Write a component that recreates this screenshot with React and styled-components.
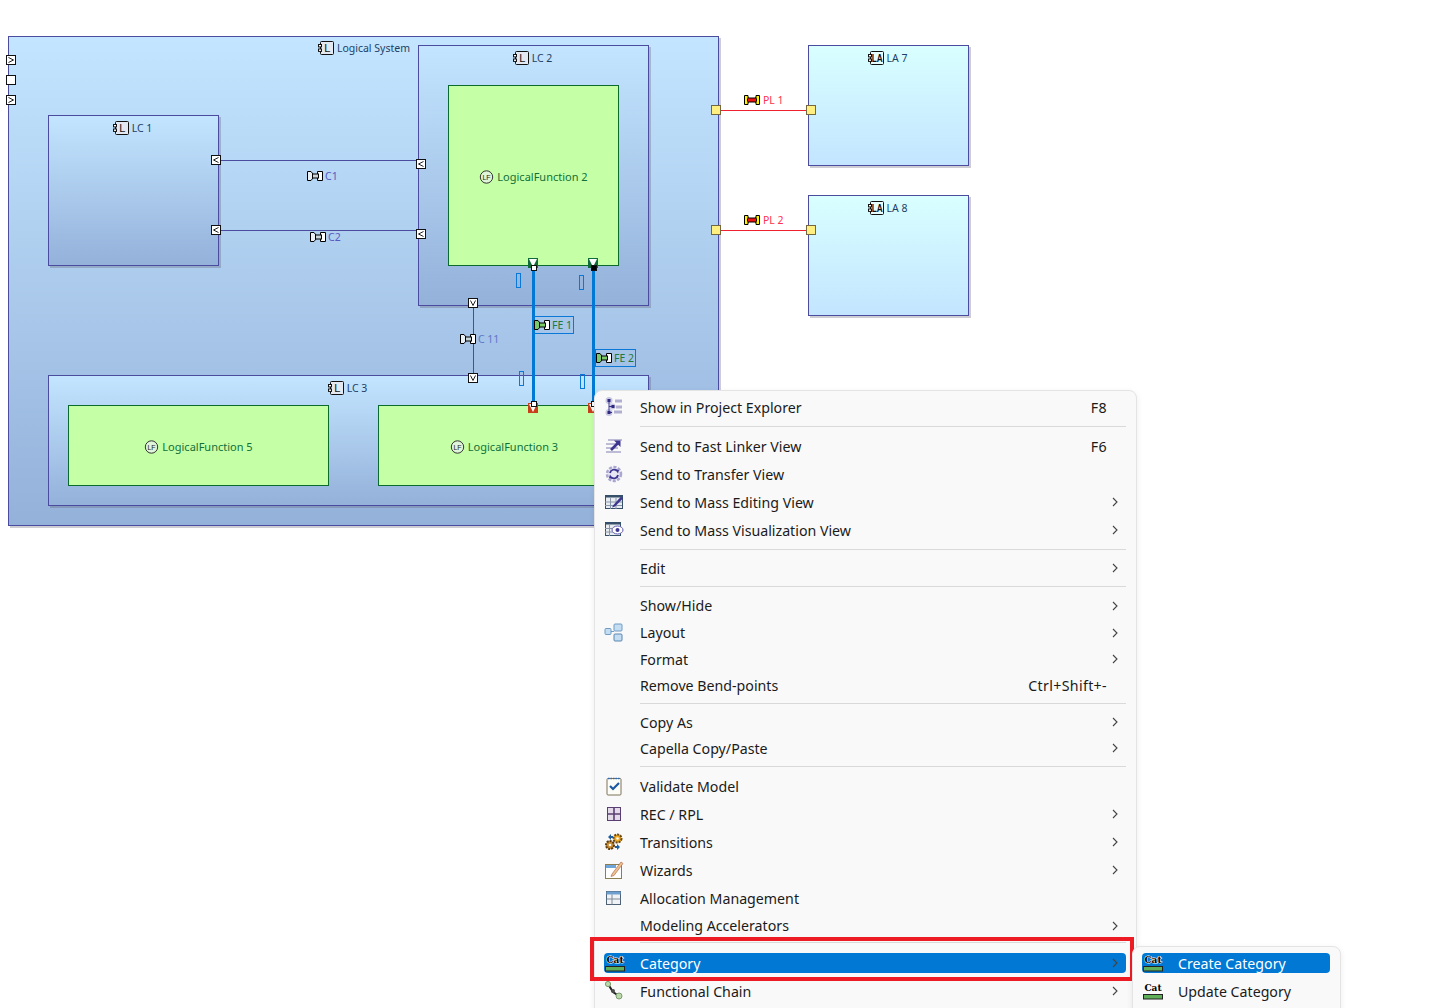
import React from "react";
import styled, { createGlobalStyle } from "styled-components";

const GlobalStyle = createGlobalStyle`
  html, body {
    margin: 0;
    height: 1008px;
    overflow: hidden;
    background: #fff;
  }
`;

const Canvas = styled.div`
  position: relative;
  width: 1454px;
  height: 1008px;
  overflow: hidden;
  font-family: "Noto Sans", "Open Sans", sans-serif;
`;

const EdgeLayer = styled.svg`
  position: absolute;
  left: 0;
  top: 0;
  z-index: 3;
`;

const Node = styled.div`
  position: absolute;
  left: ${p => p.$x}px;
  top: ${p => p.$y}px;
  width: ${p => p.$w}px;
  height: ${p => p.$h}px;
  box-sizing: border-box;
  display: flex;
  border: 1px solid ${p => (p.$kind === "function" ? "#0b6b2d" : "#4b4ba0")};
  box-shadow: ${p => (p.$kind === "function" ? "none" : "2px 2px 0 rgba(90, 90, 110, 0.3)")};
  color: ${p => (p.$kind === "function" ? "#11703a" : "#1d3f66")};
  justify-content: ${p => (p.$end ? "flex-end" : "center")};
  align-items: ${p => (p.$kind === "function" ? "center" : "flex-start")};
  padding: ${p => (p.$kind === "function" ? "2px" : p.$end ? "4px" : "5px")}
    ${p => (p.$end ? "308px" : p.$kind === "function" ? "0" : "2px")} 0 0;
  background: ${p =>
    p.$kind === "function"
      ? "#c5ffa6"
      : p.$kind === "actor"
      ? "linear-gradient(#d9ffff, #c3e5ff)"
      : "linear-gradient(#c3e5ff, #94b1da)"};
`;

const NodeTitle = styled.span`
  display: inline-flex;
  align-items: center;
  gap: 3px;
  font-size: ${p => (p.$function ? 11 : 10.5)}px;
  line-height: 14px;
  white-space: nowrap;
`;

const SquarePort = styled.div`
  position: absolute;
  z-index: 4;
  left: ${p => p.$x}px;
  top: ${p => p.$y}px;
  width: 10px;
  height: 10px;
  box-sizing: border-box;
  display: flex;
  border: 1px solid ${p => (p.$tone === "actor" ? "#75683f" : "#111")};
  background: ${p => (p.$tone === "actor" ? "#ffee80" : "#fff")};
`;

const PinPort = styled.div`
  position: absolute;
  z-index: 4;
  left: ${p => p.$x}px;
  top: ${p => p.$y}px;
  width: 10px;
  height: 10px;
  background: ${p => (p.$tone === "red" ? "#c8401a" : "#0f6b3a")};

  &::after {
    content: "";
    position: absolute;
    left: 1px;
    top: 1px;
    border-left: 4px solid transparent;
    border-right: 4px solid transparent;
    border-top: 8px solid #fff;
  }
`;

const Handle = styled.div`
  position: absolute;
  z-index: 5;
  left: ${p => p.$x}px;
  top: ${p => p.$y}px;
  width: 6px;
  height: 6px;
  box-sizing: border-box;
  border: 1px solid #111;
  background: ${p => (p.$dark ? "#000" : "#fff")};
`;

const Marker = styled.div`
  position: absolute;
  z-index: 4;
  left: ${p => p.$x}px;
  top: ${p => p.$y}px;
  width: 5px;
  height: ${p => p.$h}px;
  box-sizing: border-box;
  border: 1px solid #0a78d6;
`;

const EdgeLabel = styled.div`
  position: absolute;
  z-index: 5;
  left: ${p => p.$x}px;
  top: ${p => p.$y}px;
  display: flex;
  align-items: center;
  gap: ${p => (p.$physical ? 3 : 2)}px;
  height: ${p => (p.$selected ? 18 : 12)}px;
  box-sizing: border-box;
  padding-right: ${p => (p.$selected ? "1px" : "0")};
  border: ${p => (p.$selected ? "1px solid #0a78d6" : "none")};
  font-size: 10.5px;
  white-space: nowrap;
  color: ${p => p.$color};
`;

const Menu = styled.div`
  position: absolute;
  z-index: 10;
  left: 594px;
  top: 390px;
  width: 543px;
  box-sizing: border-box;
  padding: 2px 10px 0 9px;
  height: 640px;
  background: #f9f9f9;
  border: 1px solid #e4e4e4;
  border-radius: 8px;
  box-shadow: 0 2px 6px rgba(0, 0, 0, 0.08);
`;

const SubMenu = styled(Menu)`
  z-index: 12;
  left: 1132px;
  top: 946px;
  width: 209px;
  height: 90px;
  padding: 2px 10px 0 9px;
`;

const Row = styled.div`
  display: grid;
  grid-template-columns: ${p => (p.$sub ? "36px 1fr" : "36px 1fr auto 19px")};
  align-items: center;
  height: ${p => p.$h || 28}px;
  font-size: 14.2px;
  color: ${p => (p.$active ? "#fff" : "#1b1b1b")};
  white-space: nowrap;

  ${p =>
    p.$active &&
    `
    background: #0078d4;
    border-radius: 4px;
    height: 20px;
    margin: 4px 0;
  `}
`;

const IconSlot = styled.span`
  display: flex;
  align-items: center;
  justify-content: flex-start;
`;

const Shortcut = styled.span`
  color: #1b1b1b;
  letter-spacing: 0.35px;
`;

const Chevron = styled.svg`
  margin-left: 5px;
  width: 6px;
  height: 10px;
`;

const Separator = styled.div`
  height: 1px;
  margin: ${p => p.$top || 5}px 0 ${p => p.$bottom || 5}px 36px;
  background: #d9d9d9;
`;

const Highlight = styled.div`
  position: absolute;
  z-index: 11;
  left: 590px;
  top: 937px;
  width: 544px;
  height: 44px;
  box-sizing: border-box;
  border: 4px solid #ed1c24;
`;

const ComponentIcon = ({ text = "L" }) => (
  <svg width="16" height="14" viewBox="0 0 16 14">
    <rect x="2.5" y="0.5" width="13" height="13" rx="1" fill={text === "LA" ? "#e8ffff" : "#e4e8f0"} stroke="#111" />
    <rect x="0.5" y="3.5" width="3" height="2.4" fill="#fff" stroke="#111" />
    <rect x="0.5" y="8" width="3" height="2.4" fill="#fff" stroke="#111" />
    <text
      x="9.2"
      y={text === "LA" ? 10.8 : 11}
      textAnchor="middle"
      fontFamily="Liberation Sans, sans-serif"
      fontWeight={text === "LA" ? 700 : 400}
      fontSize={text === "LA" ? 10 : 11}
      textLength={text === "LA" ? 11 : undefined}
      lengthAdjust={text === "LA" ? "spacingAndGlyphs" : undefined}
      fill="#111"
    >
      {text}
    </text>
  </svg>
);

const FunctionIcon = () => (
  <svg width="15" height="14" viewBox="0 0 15 14">
    <circle cx="7.5" cy="7" r="6.2" fill="#dff5d8" stroke="#333" />
    <text x="7.5" y="9.6" textAnchor="middle" fontFamily="Liberation Sans, sans-serif" fontSize="7" fill="#222">
      LF
    </text>
  </svg>
);

const ExchangeIcon = ({ left = "#e8f0f5", right = "#fff", bar = "#c8d4d8" }) => (
  <svg width="16" height="10" viewBox="0 0 16 10">
    <path d="M0.5 0.5H4L6 3V7L4 9.5H0.5Z" fill={left} stroke="#000" />
    <path d="M15.5 0.5H10.5V3L9.5 3.5V6.5L10.5 7V9.5H15.5Z" fill={right} stroke="#000" />
    <rect x="5.5" y="3" width="6" height="4" fill={bar} stroke="#000" />
  </svg>
);

const PhysicalIcon = () => (
  <svg width="16" height="10" viewBox="0 0 16 10">
    <path d="M0.5 0.5H4V3H5V7H4V9.5H0.5Z" fill="#fff200" stroke="#000" />
    <path d="M15.5 0.5H12V3H11V7H12V9.5H15.5Z" fill="#fff200" stroke="#000" />
    <rect x="3.5" y="3" width="9" height="4" rx="1" fill="#f01010" stroke="#000" />
  </svg>
);

const PortGlyph = ({ dir }) => {
  const paths = {
    right: "M1.5 1.5L6.5 4L1.5 6.5",
    left: "M6.5 1.5L1.5 4L6.5 6.5",
    down: "M1.5 1.5L4 6.5L6.5 1.5"
  };
  return (
    <svg width="8" height="8" viewBox="0 0 8 8">
      {paths[dir] && <path d={paths[dir]} fill="none" stroke="#222" strokeWidth="1" />}
    </svg>
  );
};

const ExplorerIcon = () => (
  <svg width="20" height="20" viewBox="0 0 20 20">
    <circle cx="5" cy="3.5" r="3.5" fill="#c9c7e2" />
    <circle cx="5" cy="15.5" r="3.5" fill="#c9c7e2" />
    <circle cx="8.5" cy="9.5" r="3" fill="#c9c7e2" />
    <path d="M11 4h7M12 10h6M10 15h8" stroke="#b1afd0" strokeWidth="3" />
    <path d="M5 3v13M5 9.5h4M5 15.5h3" stroke="#3a3690" strokeWidth="1" fill="none" />
    <rect x="3.5" y="2" width="3" height="3" fill="#2e2a80" />
    <rect x="7.5" y="8" width="3" height="3" fill="#2e2a80" />
    <rect x="3.5" y="14" width="3" height="3" fill="#2e2a80" />
  </svg>
);

const FastLinkerIcon = () => (
  <svg width="20" height="20" viewBox="0 0 20 20">
    <path d="M4 4h14M2 8h13M2 12h12M2 16h15" stroke="#bdbcd6" strokeWidth="2" />
    <path d="M7 14L15 6" stroke="#3d3690" strokeWidth="2.6" />
    <path d="M10 4.5H16.5V11Z" fill="#3d3690" />
  </svg>
);

const TransferIcon = () => (
  <svg width="20" height="20" viewBox="0 0 20 20">
    <circle cx="10" cy="10" r="7" fill="#e8e7f3" stroke="#a9a7cf" strokeWidth="2.5" strokeDasharray="3 1.6" />
    <path d="M6 9a4 4 0 0 1 7-2M14 11a4 4 0 0 1-7 2" fill="none" stroke="#3d3690" strokeWidth="1.8" />
    <path d="M11 5l4 1-1 3.5zM9 15l-4-1 1-3.5z" fill="#3d3690" />
  </svg>
);

const MassEditIcon = () => (
  <svg width="20" height="20" viewBox="0 0 20 20">
    <rect x="1.5" y="3.5" width="17" height="13" fill="#e9edf2" stroke="#37506a" />
    <rect x="1" y="3" width="18" height="2.5" fill="#37506a" />
    <path d="M6.5 6v11M12 6v11M1 10h17M1 13.5h17" stroke="#8796a8" />
    <path d="M9 13.5l8-9 2 2-8 8-3 1z" fill="#3d3690" />
  </svg>
);

const MassVizIcon = () => (
  <svg width="20" height="20" viewBox="0 0 20 20">
    <rect x="1.5" y="2.5" width="15" height="13" fill="#e9edf2" stroke="#37506a" />
    <rect x="1" y="2" width="15" height="2.5" fill="#37506a" />
    <path d="M5.5 5v11M1 8.5h15M1 12h15" stroke="#8796a8" />
    <ellipse cx="13.5" cy="10" rx="5.5" ry="4" fill="#fff" stroke="#5f5ab0" />
    <circle cx="13.5" cy="10" r="2" fill="#3d3690" />
  </svg>
);

const LayoutIcon = () => (
  <svg width="20" height="20" viewBox="0 0 20 20">
    <rect x="1" y="5.5" width="6" height="6" rx="1" fill="#c4ddf2" stroke="#6f9cc4" />
    <rect x="10" y="1" width="8" height="7" rx="1" fill="#c4ddf2" stroke="#6f9cc4" />
    <rect x="10" y="11" width="8" height="7" rx="1" fill="#c4ddf2" stroke="#5b87b0" />
    <path d="M7 8.5h3" stroke="#6f9cc4" />
  </svg>
);

const ValidateIcon = () => (
  <svg width="20" height="20" viewBox="0 0 20 20">
    <rect x="3" y="2.5" width="14" height="16.5" rx="1" fill="#fdfdf8" stroke="#7c7356" />
    <path d="M4 2.5h12" stroke="#2f6bb0" strokeWidth="1.4" strokeDasharray="1.5 1" />
    <path d="M6 10l3 3 6-6" fill="none" stroke="#1d5aa0" strokeWidth="2.2" />
  </svg>
);

const GridIcon = () => (
  <svg width="20" height="20" viewBox="0 0 20 20">
    <rect x="3.5" y="3.5" width="13" height="13" fill="#e3dbe9" stroke="#5a3f72" />
    <path d="M10 3v14M3 10h14" stroke="#5a3f72" strokeWidth="1.6" />
  </svg>
);

const TransitionsIcon = () => (
  <svg width="20" height="20" viewBox="0 0 20 20">
    <circle cx="13.5" cy="6.5" r="4" fill="#f0a820" stroke="#6a4a10" strokeWidth="2" strokeDasharray="2 1" />
    <circle cx="13.5" cy="6.5" r="1.3" fill="#fff" />
    <circle cx="6" cy="13" r="4" fill="#c98a30" stroke="#5a3a10" strokeWidth="2" strokeDasharray="2 1" />
    <circle cx="6" cy="13" r="1.3" fill="#fff" />
    <path d="M4 5l3-3v2h2v2H7v2zM16 15l-3 3v-2h-2v-2h2v-2z" fill="#1f5f9f" />
  </svg>
);

const WizardIcon = () => (
  <svg width="20" height="20" viewBox="0 0 20 20">
    <rect x="1.5" y="4.5" width="16" height="14" fill="#fff" stroke="#8c7d52" />
    <rect x="2" y="5" width="10" height="3" fill="#6ea6dc" />
    <path d="M8 14l9-12 2 1.5-9 12-3 1z" fill="#f0c08a" stroke="#b0705a" strokeWidth="0.7" />
  </svg>
);

const AllocationIcon = () => (
  <svg width="20" height="20" viewBox="0 0 20 20">
    <rect x="2.5" y="3.5" width="14" height="13" fill="#f0f2f5" stroke="#4e6176" />
    <rect x="2.5" y="3.5" width="14" height="3" fill="#6d9fd0" />
    <path d="M2.5 11h14M8 6.5v10" stroke="#7e8b99" />
  </svg>
);

const CategoryIcon = ({ active }) => (
  <svg width="22" height="20" viewBox="0 0 22 20">
    <text
      x="11"
      y="9.5"
      textAnchor="middle"
      fontFamily="DejaVu Serif, serif"
      fontWeight="700"
      fontSize="9"
      fill="#000"
      stroke={active ? "#fff" : "none"}
      strokeWidth={active ? 1 : 0}
      paintOrder="stroke"
    >
      Cat
    </text>
    <rect x="1.5" y="13.5" width="19" height="4.5" fill="#5fae58" stroke="#222" />
  </svg>
);

const ChainIcon = () => (
  <svg width="20" height="20" viewBox="0 0 20 20">
    <path d="M4 3l5 8 6 4" fill="none" stroke="#222" strokeWidth="2" />
    <circle cx="4" cy="3" r="2.6" fill="#bcd9a8" stroke="#7a9a70" />
    <circle cx="9" cy="10" r="2" fill="#4d4d4d" />
    <circle cx="15" cy="15" r="3" fill="#bcd9a8" stroke="#7a9a70" />
  </svg>
);

const MENU_ITEMS = [
  { label: "Show in Project Explorer", icon: <ExplorerIcon />, shortcut: "F8" },
  { separator: true, top: 5, bottom: 5 },
  { label: "Send to Fast Linker View", icon: <FastLinkerIcon />, shortcut: "F6" },
  { label: "Send to Transfer View", icon: <TransferIcon /> },
  { label: "Send to Mass Editing View", icon: <MassEditIcon />, more: true },
  { label: "Send to Mass Visualization View", icon: <MassVizIcon />, more: true },
  { separator: true, top: 5, bottom: 4 },
  { label: "Edit", more: true },
  { separator: true, top: 4, bottom: 5 },
  { label: "Show/Hide", more: true, h: 27 },
  { label: "Layout", icon: <LayoutIcon />, more: true, h: 27 },
  { label: "Format", more: true, h: 26 },
  { label: "Remove Bend-points", shortcut: "Ctrl+Shift+-", h: 26 },
  { separator: true, top: 5, bottom: 5 },
  { label: "Copy As", more: true, h: 26 },
  { label: "Capella Copy/Paste", more: true, h: 26 },
  { separator: true, top: 5, bottom: 5 },
  { label: "Validate Model", icon: <ValidateIcon /> },
  { label: "REC / RPL", icon: <GridIcon />, more: true },
  { label: "Transitions", icon: <TransitionsIcon />, more: true },
  { label: "Wizards", icon: <WizardIcon />, more: true },
  { label: "Allocation Management", icon: <AllocationIcon /> },
  { label: "Modeling Accelerators", more: true, h: 27 },
  { separator: true, top: 3, bottom: 10 },
  { label: "Category", icon: <CategoryIcon active />, more: true, active: true },
  { label: "Functional Chain", icon: <ChainIcon />, more: true }
];

const MoreArrow = () => (
  <Chevron viewBox="0 0 6 10">
    <path d="M1 1l4 4-4 4" fill="none" stroke="#444" strokeWidth="1.1" />
  </Chevron>
);

const MenuRow = ({ item }) => (
  <Row $active={item.active} $h={item.h}>
    <IconSlot>{item.icon}</IconSlot>
    <span>{item.label}</span>
    <Shortcut>{item.shortcut}</Shortcut>
    {item.more ? <MoreArrow /> : <span />}
  </Row>
);

const PORTS = [
  { x: 6, y: 55, dir: "right" },
  { x: 6, y: 75 },
  { x: 6, y: 95, dir: "right" },
  { x: 211, y: 155, dir: "left" },
  { x: 211, y: 225, dir: "left" },
  { x: 416, y: 159, dir: "left" },
  { x: 416, y: 229, dir: "left" },
  { x: 468, y: 298, dir: "down" },
  { x: 468, y: 373, dir: "down" },
  { x: 711, y: 105, tone: "actor" },
  { x: 806, y: 105, tone: "actor" },
  { x: 711, y: 225, tone: "actor" },
  { x: 806, y: 225, tone: "actor" }
];

const MARKERS = [
  { x: 516, y: 273, h: 15 },
  { x: 579, y: 275, h: 15 },
  { x: 519, y: 371, h: 15 },
  { x: 580, y: 374, h: 15 }
];

const App = () => (
  <Canvas>
    <GlobalStyle />
    <Node $x={8} $y={36} $w={711} $h={490} $end>
      <NodeTitle>
        <ComponentIcon />
        Logical System
      </NodeTitle>
    </Node>
    <Node $x={48} $y={115} $w={171} $h={151}>
      <NodeTitle>
        <ComponentIcon />
        LC 1
      </NodeTitle>
    </Node>
    <Node $x={418} $y={45} $w={231} $h={261}>
      <NodeTitle>
        <ComponentIcon />
        LC 2
      </NodeTitle>
    </Node>
    <Node $x={448} $y={85} $w={171} $h={181} $kind="function">
      <NodeTitle $function>
        <FunctionIcon />
        LogicalFunction 2
      </NodeTitle>
    </Node>
    <Node $x={48} $y={375} $w={601} $h={131}>
      <NodeTitle>
        <ComponentIcon />
        LC 3
      </NodeTitle>
    </Node>
    <Node $x={68} $y={405} $w={261} $h={81} $kind="function">
      <NodeTitle $function>
        <FunctionIcon />
        LogicalFunction 5
      </NodeTitle>
    </Node>
    <Node $x={378} $y={405} $w={252} $h={81} $kind="function">
      <NodeTitle $function>
        <FunctionIcon />
        LogicalFunction 3
      </NodeTitle>
    </Node>
    <Node $x={808} $y={45} $w={161} $h={121} $kind="actor">
      <NodeTitle>
        <ComponentIcon text="LA" />
        LA 7
      </NodeTitle>
    </Node>
    <Node $x={808} $y={195} $w={161} $h={121} $kind="actor">
      <NodeTitle>
        <ComponentIcon text="LA" />
        LA 8
      </NodeTitle>
    </Node>

    <EdgeLayer width="1454" height="1008">
      <path d="M221 160.5H416M221 230.5H416M473.5 308V373" stroke="#4b4ba0" fill="none" />
      <path d="M721 110.5H806M721 230.5H806" stroke="#f02030" fill="none" />
      <path d="M533.5 268V403M593.5 268V403" stroke="#0078d4" strokeWidth="3" fill="none" />
    </EdgeLayer>

    {PORTS.map(port => (
      <SquarePort key={`${port.x}-${port.y}`} $x={port.x} $y={port.y} $tone={port.tone}>
        <PortGlyph dir={port.dir} />
      </SquarePort>
    ))}
    {MARKERS.map(marker => (
      <Marker key={marker.x} $x={marker.x} $y={marker.y} $h={marker.h} />
    ))}
    <PinPort $x={528} $y={258} />
    <PinPort $x={588} $y={258} />
    <PinPort $x={528} $y={403} $tone="red" />
    <PinPort $x={588} $y={403} $tone="red" />
    <Handle $x={531} $y={265} />
    <Handle $x={591} $y={265} $dark />
    <Handle $x={531} $y={401} />
    <Handle $x={591} $y={401} />

    <EdgeLabel $x={307} $y={170} $color="#5858c0">
      <ExchangeIcon />
      C1
    </EdgeLabel>
    <EdgeLabel $x={310} $y={231} $color="#5858c0">
      <ExchangeIcon />
      C2
    </EdgeLabel>
    <EdgeLabel $x={460} $y={333} $color="#5e78c8">
      <ExchangeIcon />C 11
    </EdgeLabel>
    <EdgeLabel $x={533} $y={316} $color="#1f7a3a" $selected>
      <ExchangeIcon left="#7ccb6a" right="#fff" bar="#7ccb6a" />
      FE 1
    </EdgeLabel>
    <EdgeLabel $x={595} $y={349} $color="#1f7a3a" $selected>
      <ExchangeIcon left="#7ccb6a" right="#fff" bar="#7ccb6a" />
      FE 2
    </EdgeLabel>
    <EdgeLabel $x={744} $y={94} $color="#ff3050" $physical>
      <PhysicalIcon />
      PL 1
    </EdgeLabel>
    <EdgeLabel $x={744} $y={214} $color="#ff3050" $physical>
      <PhysicalIcon />
      PL 2
    </EdgeLabel>

    <Menu>
      {MENU_ITEMS.map((item, i) =>
        item.separator ? (
          <Separator key={i} $top={item.top} $bottom={item.bottom} />
        ) : (
          <MenuRow key={item.label} item={item} />
        )
      )}
    </Menu>
    <Highlight />
    <SubMenu>
      <Row $sub $active>
        <IconSlot>
          <CategoryIcon active />
        </IconSlot>
        <span>Create Category</span>
      </Row>
      <Row $sub>
        <IconSlot>
          <CategoryIcon />
        </IconSlot>
        <span>Update Category</span>
      </Row>
    </SubMenu>
  </Canvas>
);

export default App;
